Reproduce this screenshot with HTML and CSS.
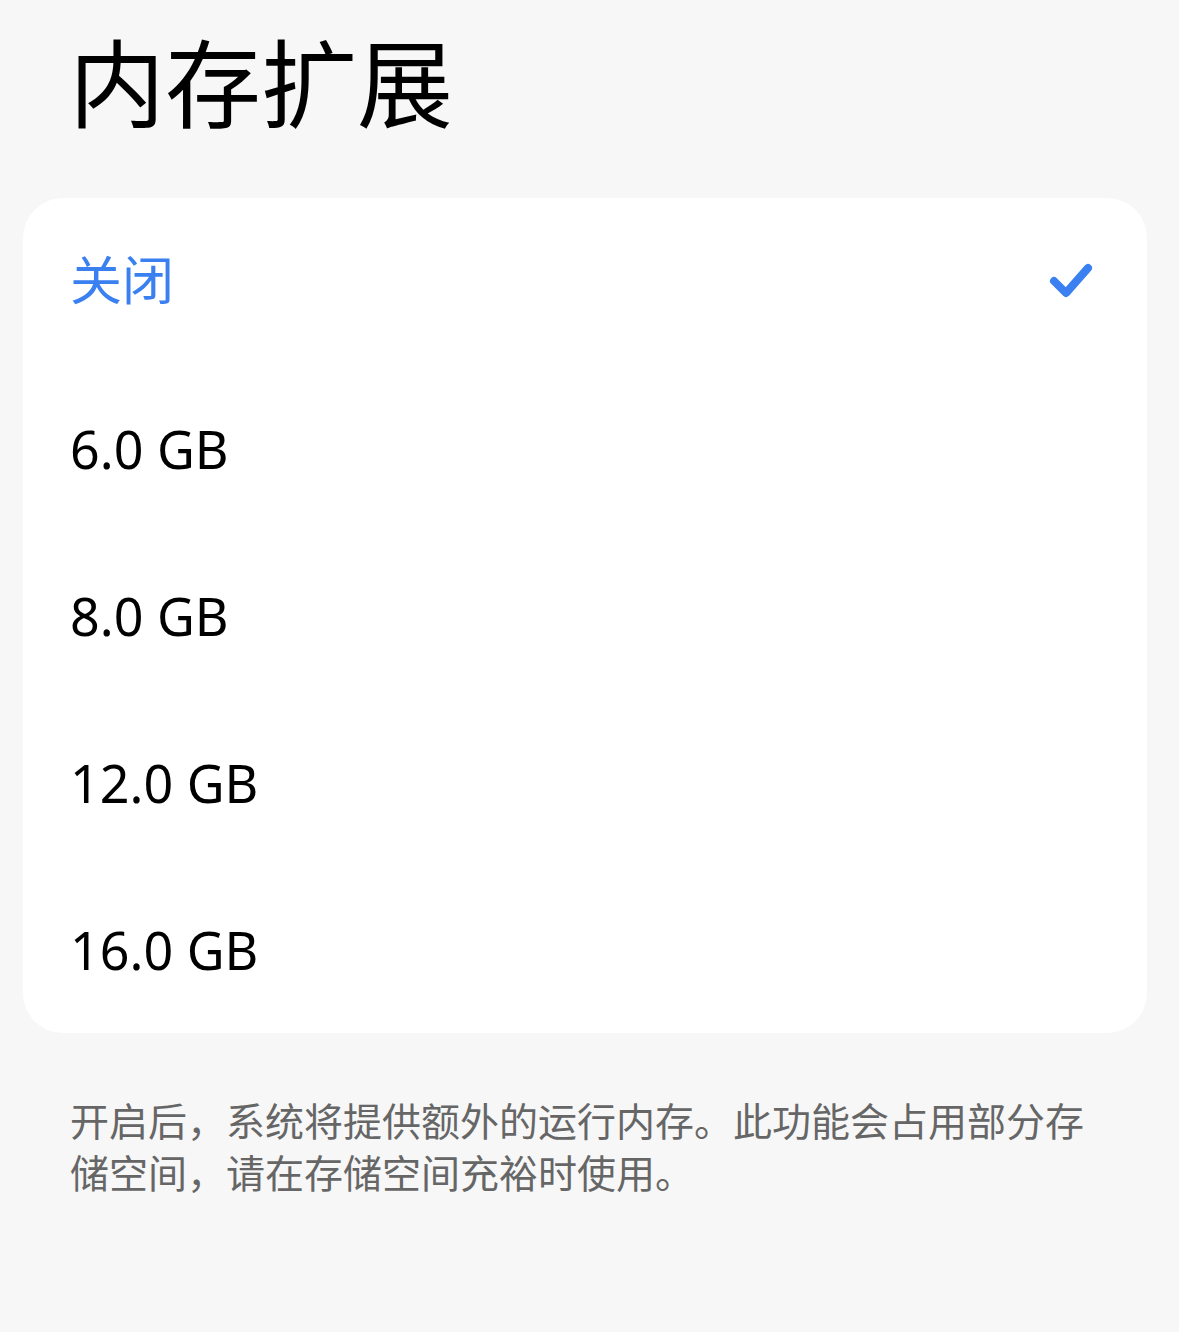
FILE: index.html
```html
<html>
    <head>
        <meta charset="utf-8">
        <title>内存扩展</title>
        <link rel="stylesheet" href="styles.css">
    </head>
    <body>
        <h1 class="title">内存扩展</h1>

        <div class="card">
            <div class="option selected">
                <span class="label">关闭</span>
                <svg class="check" width="48" height="40" viewBox="0 0 48 40">
                    <path d="M6 20 L18 32 L40 7" fill="none" stroke="#3a80f0" stroke-width="8" stroke-linecap="round" stroke-linejoin="round"/>
                </svg>
            </div>
            <div class="option"><span class="label">6.0 GB</span></div>
            <div class="option"><span class="label">8.0 GB</span></div>
            <div class="option"><span class="label">12.0 GB</span></div>
            <div class="option"><span class="label">16.0 GB</span></div>
        </div>

        <p class="note">开启后，系统将提供额外的运行内存。此功能会占用部分存储空间，请在存储空间充裕时使用。</p>
    </body>
</html>
```

FILE: styles.css
```css
body {
    margin: 0;
    background-color: #f7f7f7;
    font-family: "Noto Sans", "Noto Sans CJK SC", sans-serif;
    color: #000;
}

.title {
    margin: 32px 0 72px 0;
    padding-left: 69px;
    font-family: "Noto Sans CJK SC", sans-serif;
    font-size: 96px;
    font-weight: 400;
    line-height: 94px;
}

.card {
    margin-left: 23px;
    width: 1124px;
    background-color: white;
    border-radius: 40px;
}

.option {
    display: flex;
    align-items: center;
    justify-content: space-between;
    height: 167px;
    padding: 0 51px 0 47px;
    font-size: 52px;
}

.option.selected .label {
    margin-bottom: 8px;
    color: #3a80f0;
    font-family: "Noto Sans CJK SC", sans-serif;
}

.check {
    margin-top: -2px;
}

.note {
    margin: 60px 0 0 0;
    padding: 0 70px;
    width: 1030px;
    font-family: "Noto Sans CJK SC", sans-serif;
    font-size: 39px;
    line-height: 52px;
    color: #666;
}
```
